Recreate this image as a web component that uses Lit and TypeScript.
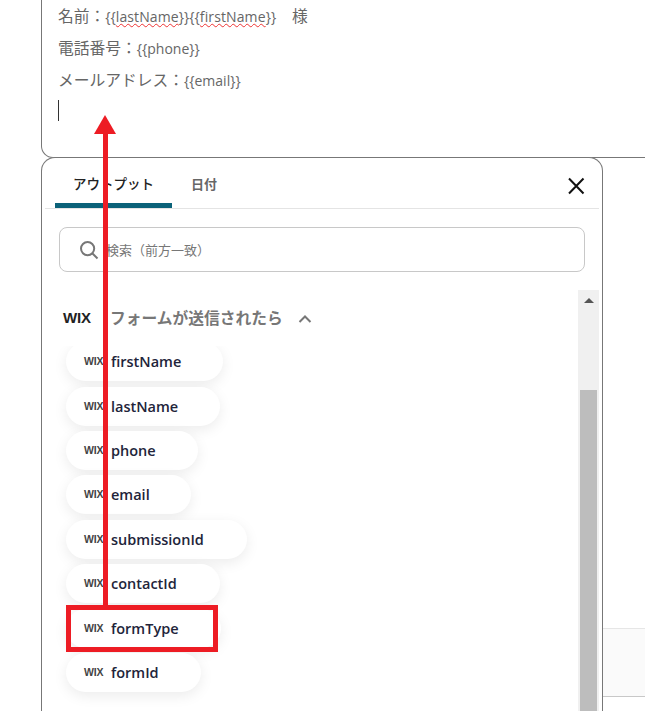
import { LitElement, css, html } from "lit";
import { customElement } from "lit/decorators.js";

const FIELDS: Array<{ name: string; width: number }> = [
  { name: "firstName", width: 157 },
  { name: "lastName", width: 154 },
  { name: "phone", width: 132 },
  { name: "email", width: 125 },
  { name: "submissionId", width: 181 },
  { name: "contactId", width: 154 },
  { name: "formType", width: 155 },
  { name: "formId", width: 135 },
];

@customElement("app-root")
export class AppRoot extends LitElement {
  render() {
    return html`
      <div class="page">
        <section class="editor">
          <p>名前：<span class="var">{{<span class="typo">lastName</span>}}{{<span class="typo">firstName</span>}}</span>　様</p>
          <p>電話番号：<span class="var">{{phone}}</span></p>
          <p>メールアドレス：<span class="var">{{email}}</span></p>
          <i class="caret"></i>
        </section>

        <div class="lower">
          <section class="panel">
            <header class="tabs">
              <span class="tab active">アウトプット</span>
              <span class="tab">日付</span>
              <svg class="close" width="18" height="18" viewBox="0 0 18 18" aria-hidden="true">
                <path d="M2 1.5 16.5 16.5M16.5 1.5 2 16.5" stroke="#111" stroke-width="2" fill="none" />
              </svg>
            </header>

            <div class="search">
              <svg width="20" height="20" viewBox="0 0 20 20" aria-hidden="true">
                <circle cx="8.6" cy="8.6" r="6.6" stroke="#777" stroke-width="2" fill="none" />
                <path d="M13.5 13.5 18.5 18.5" stroke="#777" stroke-width="2" fill="none" />
              </svg>
              <span>検索（前方一致）</span>
            </div>

            <div class="body">
              <div class="content">
                <div class="heading">
                  <span class="wix">WIX</span>
                  <span class="title">フォームが送信されたら</span>
                  <svg width="14" height="10" viewBox="0 0 14 10" aria-hidden="true">
                    <path d="M1.5 8 7 2.5 12.5 8" stroke="#777" stroke-width="2" fill="none" />
                  </svg>
                </div>
                <div class="list">
                  ${FIELDS.map(
                    (f) => html`
                      <div class="pill" style="width:${f.width}px">
                        <span class="wix small">WIX</span>
                        <span>${f.name}</span>
                      </div>
                    `,
                  )}
                </div>
              </div>
              <div class="scrollbar">
                <i class="up"></i>
                <i class="thumb"></i>
              </div>
            </div>
          </section>

          <aside class="side"><div class="strip"></div></aside>
        </div>

        <!-- 赤い注釈 -->
        <div class="mark-box"></div>
        <div class="mark-line"></div>
        <div class="mark-head"></div>
      </div>
    `;
  }

  static styles = css`
    :host {
      display: block;
      font-family: "Open Sans", "Noto Sans CJK JP", sans-serif;
    }
    .page {
      position: relative;
      width: 645px;
      height: 711px;
      overflow: hidden;
      background: #fff;
    }
    .editor {
      box-sizing: border-box;
      height: 158px;
      margin-left: 41px;
      margin-right: -20px;
      padding: 0 0 0 16px;
      border: 1px solid #777;
      border-top: 0;
      border-radius: 0 0 0 12px;
      color: #666;
    }
    .editor p {
      margin: 0;
      height: 32px;
      line-height: 32px;
      font-size: 15.75px;
      white-space: pre;
    }
    .var {
      font-size: 14px;
    }
    .typo {
      letter-spacing: 0.12px;
      text-decoration: underline wavy #e33;
      text-decoration-thickness: 1px;
    }
    .caret {
      display: block;
      width: 1px;
      height: 21px;
      margin-top: 4px;
      background: #333;
    }
    .lower {
      display: flex;
      align-items: flex-start;
    }
    .panel {
      box-sizing: border-box;
      flex: none;
      width: 562px;
      height: 580px;
      margin-left: 41px;
      margin-top: -1px;
      border: 1.5px solid #777;
      border-bottom: 0;
      border-radius: 14px 14px 0 0;
      background: #fff;
      padding: 0 3px;
    }
    .tabs {
      display: flex;
      align-items: flex-start;
      height: 51px;
      border-bottom: 1px solid #e4e4e4;
      box-sizing: border-box;
    }
    .tab {
      padding: 17px 0 0;
      height: 45px;
      box-sizing: border-box;
      font-size: 13px;
      line-height: 19px;
      font-weight: 700;
      color: #666;
      margin-left: 19px;
    }
    .tab.active {
      box-sizing: content-box;
      height: 28px;
      width: 117px;
      margin-left: 10px;
      border-bottom: 5px solid #0b6279;
      border-radius: 5px 5px 0 0;
      font-weight: 500;
      font-size: 13.5px;
      text-align: center;
      color: #222;
    }
    .close {
      margin: 19px 14px 0 auto;
    }
    .search {
      box-sizing: border-box;
      display: flex;
      align-items: center;
      gap: 7px;
      width: 526px;
      height: 45px;
      margin: 18px 0 0 14px;
      padding-left: 19px;
      border: 1px solid #c8c8c8;
      border-radius: 8px;
      font-size: 13px;
      color: #777;
    }
    .body {
      display: flex;
      margin-top: 18px;
    }
    .content {
      flex: none;
      width: 533px;
    }
    .heading {
      display: flex;
      align-items: center;
      height: 56px;
      box-sizing: border-box;
      padding: 0 0 1px 18px;
    }
    .heading svg {
      margin: 2px 0 0 15px;
    }
    .wix {
      font-family: "Liberation Sans", sans-serif;
      font-weight: 700;
      font-size: 15px;
      letter-spacing: -0.2px;
      color: #222;
      width: 47px;
      flex: none;
    }
    .wix.small {
      font-size: 10.5px;
      width: 27px;
      color: #444;
      padding-bottom: 1px;
    }
    .title {
      font-size: 15.75px;
      font-weight: 700;
      color: #777;
    }
    .list {
      display: flex;
      flex-direction: column;
      gap: 5.42px;
      height: 400px;
      margin-left: -40px;
      padding-left: 61px;
      padding-right: 30px;
      overflow: hidden;
    }
    .pill {
      box-sizing: border-box;
      flex: none;
      display: flex;
      align-items: center;
      height: 39px;
      padding-left: 18px;
      border-radius: 20px;
      background: #fff;
      box-shadow: 0 4px 14px rgba(0, 0, 0, 0.08);
      font-size: 14.5px;
      font-weight: 600;
      color: #22243a;
    }
    .pill:first-child {
      margin-top: -3.9px;
    }
    .scrollbar {
      position: relative;
      flex: none;
      width: 21px;
      height: 430px;
      background: #f0f0f0;
    }
    .scrollbar .up {
      position: absolute;
      top: 8px;
      left: 6px;
      border: 5px solid transparent;
      border-top: 0;
      border-bottom: 5px solid #555;
    }
    .scrollbar .thumb {
      position: absolute;
      top: 100px;
      bottom: 0;
      left: 2px;
      right: 2px;
      background: #bdbdbd;
    }
    .side {
      flex: 1;
      padding-top: 470px;
    }
    .strip {
      box-sizing: border-box;
      height: 69px;
      background: #fafafa;
      border-top: 1px solid #e6e6e6;
      border-bottom: 1px solid #c8c8c8;
    }
    .mark-box {
      position: absolute;
      left: 66px;
      top: 605px;
      width: 152px;
      height: 47px;
      box-sizing: border-box;
      border: 5px solid #ed1c24;
    }
    .mark-line {
      position: absolute;
      left: 103px;
      top: 130px;
      width: 5px;
      height: 476px;
      background: #ed1c24;
    }
    .mark-head {
      position: absolute;
      left: 94px;
      top: 115px;
      border: 11px solid transparent;
      border-top: 0;
      border-bottom: 19px solid #ed1c24;
    }
  `;
}

declare global {
  interface HTMLElementTagNameMap {
    "app-root": AppRoot;
  }
}
